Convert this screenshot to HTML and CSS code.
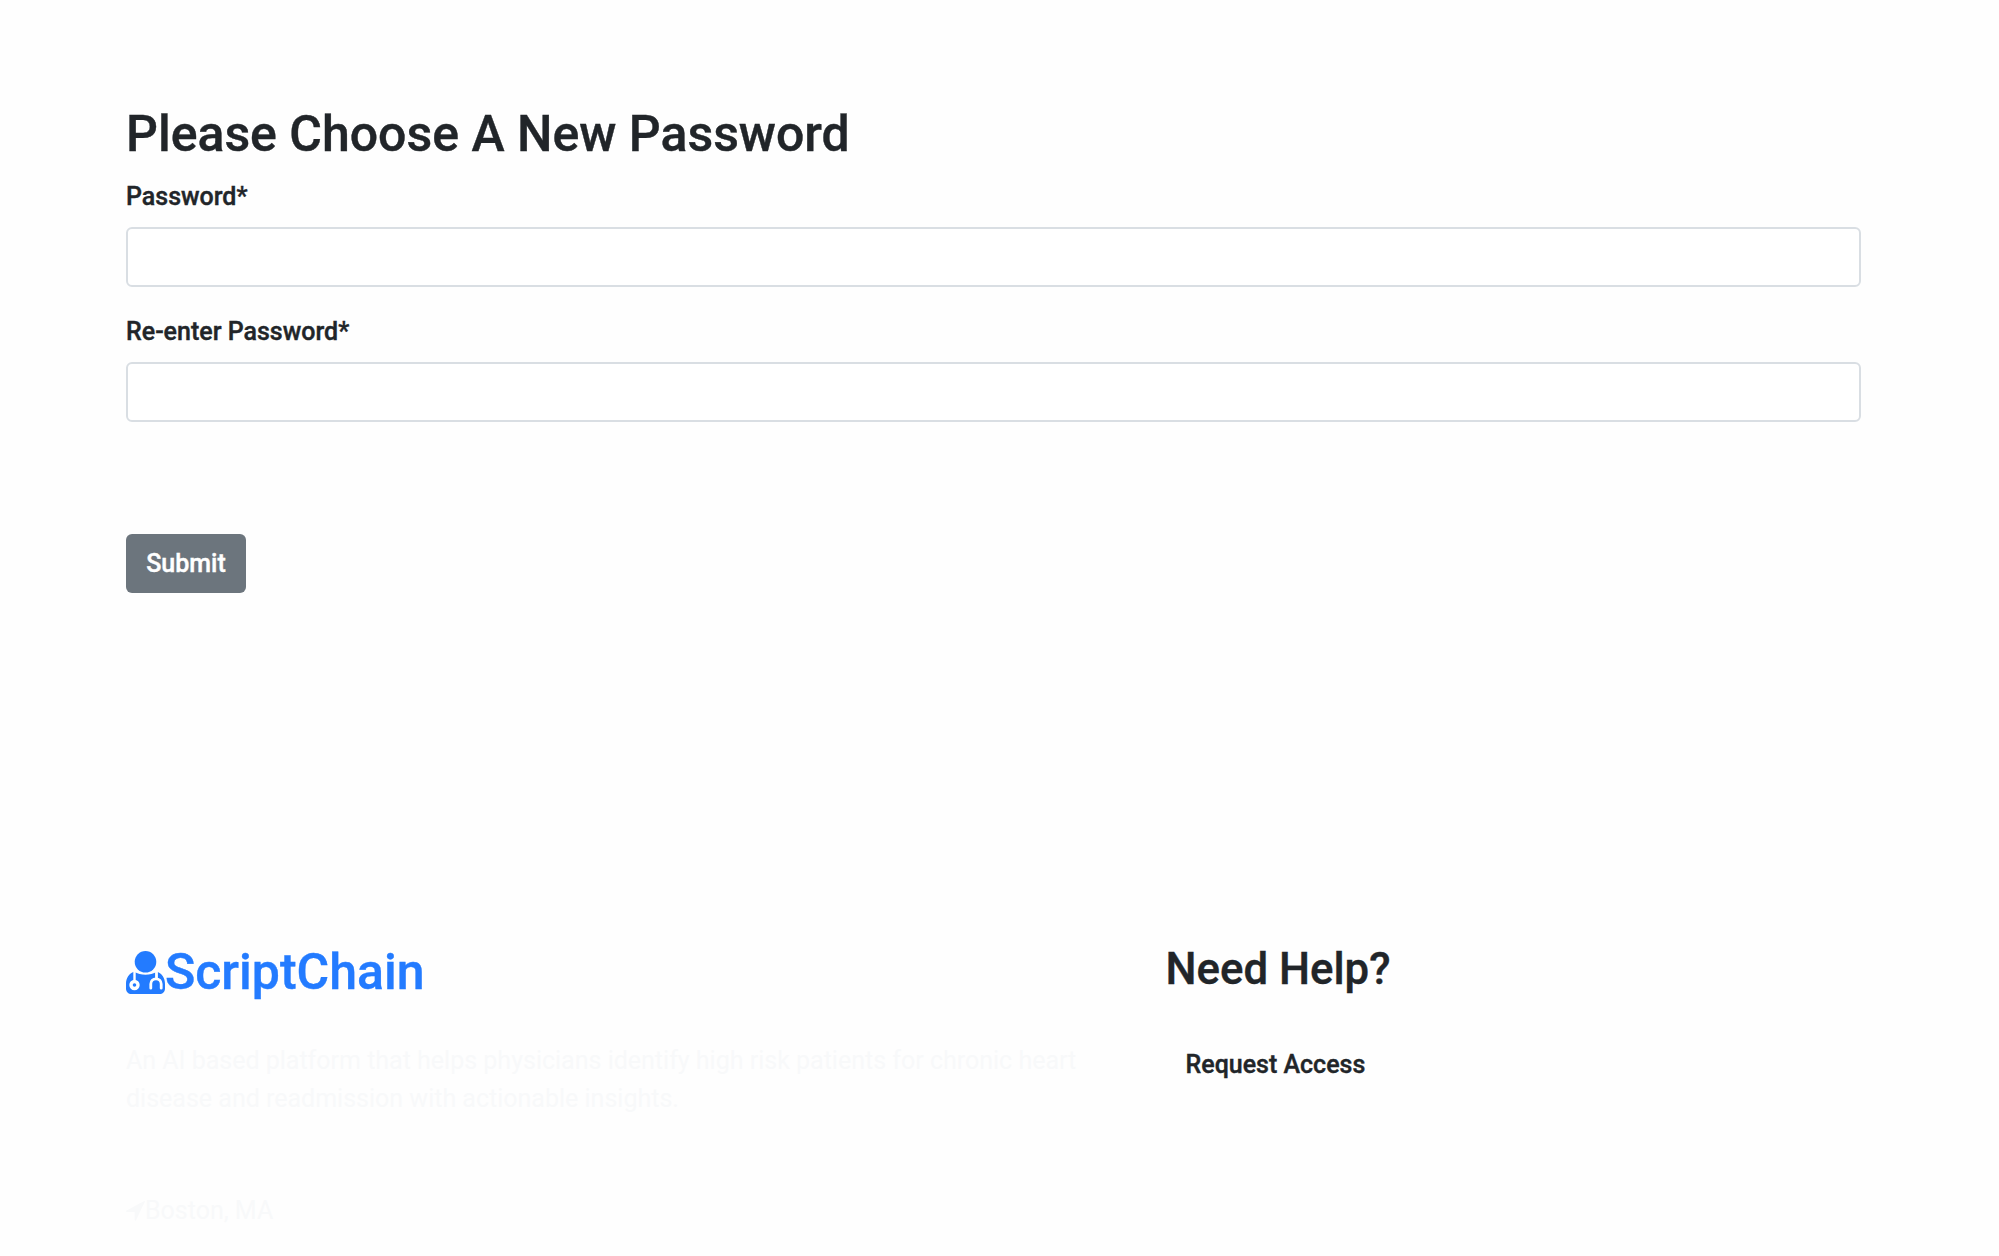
FILE: index.html
```html
<!DOCTYPE html>
<html lang="en">
<head>
<meta charset="utf-8">
<title>ScriptChain</title>
<link rel="stylesheet" href="styles.css">
</head>
<body>
<main class="container">
  <h1 class="title">Please Choose A New Password</h1>
  <form class="form">
    <div class="form-group">
      <label class="label" for="password">Password*</label>
      <input class="input" id="password" type="password">
    </div>
    <div class="form-group">
      <label class="label" for="password2">Re-enter Password*</label>
      <input class="input" id="password2" type="password">
    </div>
    <button class="button" type="button">Submit</button>
  </form>
</main>
<footer class="container footer">
  <section class="about">
    <h2 class="brand">
      <svg class="brand-icon" viewBox="0 0 39 43" aria-hidden="true">
        <circle cx="19.5" cy="10.8" r="10.8" fill="currentColor"/>
        <path fill="currentColor" d="M8 20.8C3 22.5 0 27 0 33v4.500C0 41 2.400 43 5.500 43h28c3.100 0 5.500-2 5.500-5.500V33c0-6-3-10.500-8-12.200-7 4-16 4-23 0z"/>
        <g fill="none" stroke="#fff" stroke-linecap="round">
          <path stroke-width="2.400" d="M8.500 20v9.500"/>
          <circle stroke-width="3.400" cx="8.500" cy="34" r="3.500"/>
          <path stroke-width="2.800" d="M30.500 20v7M24.800 37.200V33c0-3.300 2.200-5.200 5.200-5.200s5.200 1.900 5.200 5.200v4.200"/>
        </g>
      </svg><span>ScriptChain</span>
    </h2>
    <p class="text">An AI based platform that helps physicians identify high risk patients for chronic heart disease and readmission with actionable insights.</p>
    <p class="text place">
      <svg class="place-icon" viewBox="0 0 19 20" aria-hidden="true"><path fill="currentColor" d="M18.800.8 10 19.200c-.3.800-1.300.600-1.300-.300V11H.9c-1 0-1.200-1-.3-1.400L17.800.2c.7-.3 1.200 0 1 .6z"/></svg><span>Boston, MA</span>
    </p>
  </section>
  <section class="help">
    <h3 class="help-title">Need Help?</h3>
    <a class="link">Request Access</a>
  </section>
</footer>
</body>
</html>
```
FILE: styles.css
```css
* { box-sizing: border-box; }
body {
  margin: 0;
  padding-top: 104px;
  background: #fefefe;
  color: #212529;
  font: 400 25px/37.5px Roboto, "Liberation Sans", sans-serif;
}
h1, h2, h3, p { margin: 0; }
.container { width: 1735px; margin-left: 126px; }
.title, .label, .button, .brand, .help-title, .link {
  font-weight: 500;
  -webkit-text-stroke: 0.4px currentColor;
}
.title { font-size: 50px; line-height: 60px; margin-bottom: 14px; }
.form-group { height: 135px; }
.label { display: block; height: 49px; }
.input {
  display: block;
  width: 100%;
  height: 60px;
  padding: 9px 19px;
  border: 2px solid #d9dee3;
  border-radius: 6px;
  background: #fff;
  font: inherit;
}
.button {
  display: block;
  width: 120px;
  height: 59px;
  margin-top: 86px;
  padding: 0;
  border: 0;
  border-radius: 6px;
  background: #6c757d;
  color: #fff;
  font-family: inherit;
  font-size: 25px;
}
.footer { display: flex; margin-top: 350px; }
.about { width: 1039.5px; padding-right: 47px; }
.brand {
  display: flex;
  align-items: center;
  height: 60px;
  margin-top: -1px;
  color: #237bff;
  font-size: 50px;
  line-height: 60px;
}
.brand-icon { width: 39px; height: 43px; }
.text { margin-top: 40px; color: #f8f9fa; }
.place { display: flex; align-items: center; margin-top: 75px; }
.place-icon { width: 19px; height: 20px; }
.help-title { font-size: 43.75px; line-height: 52.5px; }
.link { display: block; margin-top: 50px; padding-left: 20px; }
```
